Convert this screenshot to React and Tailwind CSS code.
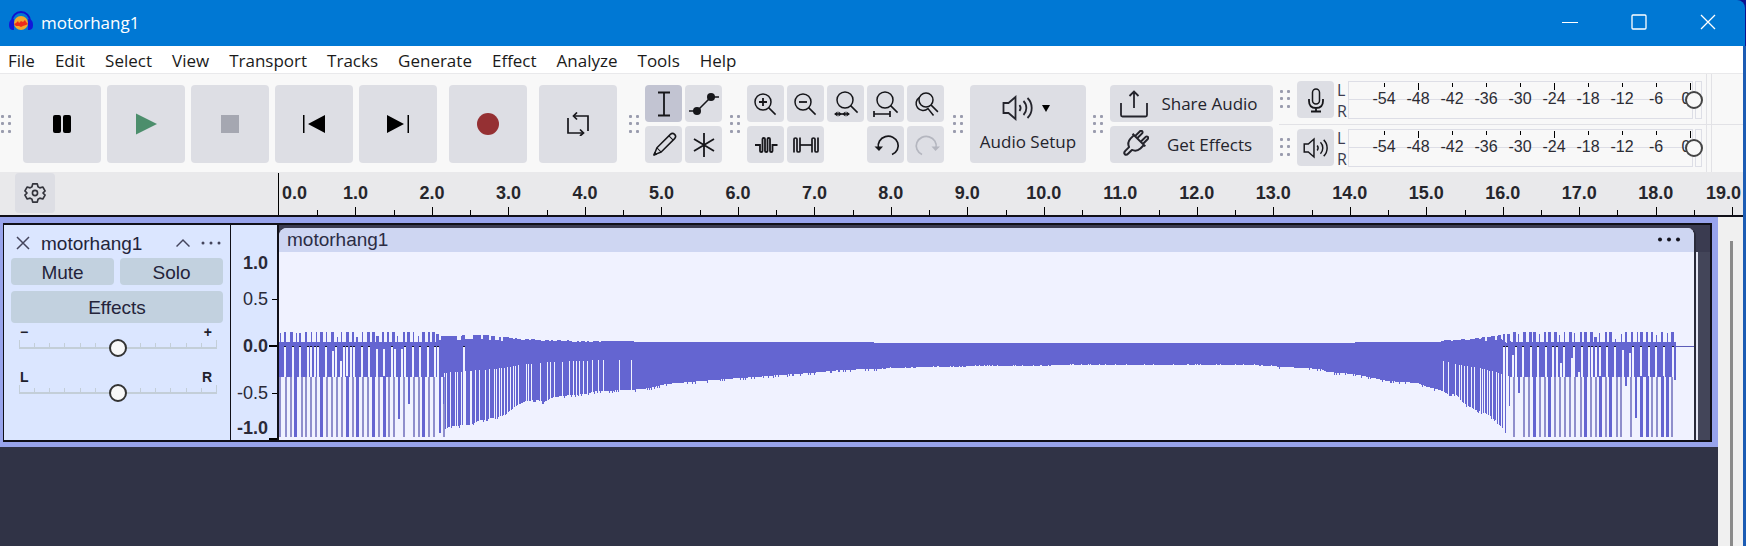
import clsx from 'clsx';

const MENUS = ['File', 'Edit', 'Select', 'View', 'Transport', 'Tracks', 'Generate', 'Effect', 'Analyze', 'Tools', 'Help'];

const DB_MARKS = ['-54', '-48', '-42', '-36', '-30', '-24', '-18', '-12', '-6', '0'];
const TALL_MARKS = ['-48', '-24', '0'];

// seconds visible on the timeline
const VISIBLE_SECONDS = 19.14;

/* ---------- waveform data ---------- */

const WAVE_W = 1415;
const WAVE_H = 189;
const ZERO = 94;
const WAVE_END = 1397;

// [x, y] envelopes, linear between points
const TOP_ENV = [
  [0, 89], [158, 89], [160, 83], [205, 82], [225, 84], [245, 86], [270, 87], [315, 88], [395, 89], [590, 89],
  [600, 90], [1070, 90], [1080, 89], [1160, 89], [1166, 87], [1185, 86], [1208, 84], [1222, 82], [1232, 89], [1397, 89],
];
const INNER_ENV = [
  [0, 125], [158, 125], [161, 121], [190, 119], [225, 116], [245, 112], [275, 110], [325, 108], [400, 108],
  [1150, 108], [1164, 109], [1182, 113], [1200, 116], [1216, 120], [1230, 124], [1232, 125], [1397, 125],
];
const OUTER_ENV = [
  [0, 125], [158, 125], [163, 125], [165, 178], [171, 174], [190, 173], [198, 169], [212, 166], [226, 163], [235, 155],
  [246, 149], [258, 148], [264, 150], [275, 145], [291, 143], [305, 142], [318, 139], [351, 138], [371, 136], [386, 132],
  [411, 130], [446, 127], [476, 125], [501, 123], [531, 121], [561, 118], [591, 117], [651, 115], [721, 114], [821, 113],
  [971, 113], [1006, 115], [1041, 117], [1048, 120], [1074, 122], [1094, 126], [1108, 129], [1138, 131], [1148, 135],
  [1161, 138], [1168, 142], [1176, 142], [1184, 151], [1192, 156], [1202, 160], [1208, 162], [1216, 168], [1222, 175],
  [1229, 182], [1231, 125], [1397, 125],
];

// columns that dip to full scale, the wide ones are drawn solid
const DEEP = [
  0, 6, 11, 22, 26, 31, 36, 47, 52, 57, 62, 73, 83, 88, 99, 109, 114, 124, 134, 139, 149, 154, 164,
  1234, 1244, 1249, 1260, 1265, 1275, 1280, 1285, 1290, 1295, 1301, 1311, 1316, 1326, 1337, 1341, 1351, 1372, 1377, 1392,
];
const DEEP_WIDE = [15, 41, 67, 77, 93, 104, 143, 1254, 1269, 1305, 1320, 1330, 1361, 1367, 1382, 1387];
const DIPS = [[119, 167], [129, 152], [160, 181], [1239, 141], [1346, 134], [1356, 166], [1395, 128]];

// light slots cut out of the body, [x, y] ones start lower than the zero line
const SLOTS = [
  5, 13, 20, 28, 31, 35, 38, 46, [53, 99], 56, [61, 109], 64, 67, 71, 74, 82, 89, [97, 97], [104, 97], 112, [115, 97],
  [122, 97], 125, 133, 140, 148, 155, 158, 184, 1224, 1227, [1233, 103], 1236, 1243, 1251, 1258, 1266, 1273, 1277,
  [1281, 111], 1284, [1292, 106], 1294, [1299, 120], 1302, 1309, 1312, 1316, 1320, 1327, 1335, [1343, 98], [1350, 101],
  1353, 1361, 1369, 1376, 1384, 1393,
].map((s) => (Array.isArray(s) ? s : [s, ZERO + 1]));

// slots that only start under the inner envelope
const LOW_SLOTS = [
  165, 167, 171, 176, 178, 182, 186, 191, 192, 196, 200, 206, 210, 215, 217, 220, 222, 225, 228, 231, 234, 236, 239,
  247, 249, 252, 261, 268, 271, 275, 283, 290, 294, 297, 300, 304, 308, 313, 319, 324, 340, 352, 1164, 1169, 1176, 1180,
  1182, 1185, 1188, 1192, 1195, 1201, 1203, 1205, 1208, 1210, 1213, 1217, 1219, 1222, 1225, 1229, 1231,
];

const SPIKES = [
  [1, 1, 80], [5, 2, 79], [11, 3, 79], [17, 1, 80], [20, 2, 80], [26, 2, 79], [32, 1, 79], [37, 1, 79], [41, 3, 79],
  [47, 1, 79], [52, 3, 79], [58, 1, 84], [62, 1, 79], [67, 3, 79], [73, 2, 79], [77, 2, 84], [83, 1, 79], [88, 3, 79],
  [93, 3, 79], [97, 3, 83], [103, 2, 79], [108, 2, 79], [113, 3, 79], [118, 1, 83], [124, 2, 79], [128, 3, 79],
  [134, 1, 79], [139, 1, 83], [143, 3, 79], [149, 2, 79], [153, 3, 79], [157, 3, 81],
  [1224, 2, 81], [1228, 3, 81], [1234, 3, 79], [1239, 1, 81], [1244, 3, 79], [1250, 3, 79], [1254, 3, 79], [1260, 1, 81],
  [1265, 2, 79], [1269, 3, 79], [1275, 3, 79], [1280, 1, 82], [1285, 1, 79], [1290, 3, 79], [1295, 1, 80], [1301, 2, 79],
  [1305, 3, 79], [1311, 3, 79], [1315, 3, 84], [1320, 1, 80], [1326, 2, 79], [1330, 3, 79], [1336, 1, 86], [1342, 1, 81],
  [1346, 2, 79], [1352, 2, 79], [1358, 1, 79], [1361, 3, 79], [1367, 2, 79], [1372, 2, 79], [1377, 1, 82],
  [1382, 2, 79], [1388, 1, 80], [1392, 3, 79],
];

function envelopeAt(points, x) {
  for (let i = 1; i < points.length; i++) {
    const [x0, y0] = points[i - 1];
    const [x1, y1] = points[i];
    if (x <= x1) return y0 + ((y1 - y0) * (x - x0)) / (x1 - x0);
  }
  return points[points.length - 1][1];
}

function noise(x) {
  const n = Math.sin(x * 12.9898) * 43758.5453;
  return n - Math.floor(n);
}

function bar(x, y0, y1, w = 1) {
  return `M${x} ${y0}h${w}V${y1}h-${w}z`;
}

function buildBody() {
  let d = '';
  for (let x = 0; x < WAVE_END; x++) {
    let top = envelopeAt(TOP_ENV, x);
    let bottom = envelopeAt(OUTER_ENV, x);
    const edge = x > 158 && x < 1232;
    if (edge && (x < 330 || x > 1165) && noise(x >> 1) > 0.6) top += x < 230 || x > 1205 ? 4 : 1;
    if (edge && noise(x) > 0.85) bottom += x > 600 && x < 1000 ? -1 : 2;

    const slot = SLOTS.find((s) => s[0] === x || s[0] + 1 === x);
    if (slot) bottom = slot[1];
    else if (LOW_SLOTS.includes(x)) bottom = envelopeAt(INNER_ENV, x);
    d += bar(x, Math.round(top), Math.round(bottom));
  }
  DEEP_WIDE.forEach((x) => {
    d += bar(x, 124, 185, 3);
  });
  DIPS.forEach(([x, y]) => {
    d += bar(x, 120, y, 2);
  });
  SPIKES.forEach(([x, w, y]) => {
    d += bar(x, y, ZERO, w);
  });
  return d;
}

const BODY_PATH = buildBody();
const DEEP_PATH = DEEP.map((x) => bar(x, 125, 185, 2)).join('');

/* ---------- small pieces ---------- */

function Grip({ className }) {
  return (
    <svg width="12" height="20" viewBox="0 0 12 20" fill="#9a9cae" className={clsx('shrink-0', className)}>
      {[1, 8].map((x) => [1, 8, 16].map((y) => <rect key={`${x}-${y}`} x={x} y={y} width="3" height="3" rx="1" />))}
    </svg>
  );
}

function ToolButton({ label, active, className, children }) {
  return (
    <button
      type="button"
      aria-label={label}
      className={clsx(
        'flex shrink-0 items-center justify-center rounded-sm text-[#16161a]',
        active ? 'bg-[#c2c4d2]' : 'bg-[#dddee4]',
        className
      )}
    >
      {children}
    </button>
  );
}

function Icon({ size = 30, children, ...rest }) {
  return (
    <svg width={size} height={size} viewBox={`0 0 ${size} ${size}`} fill="none" stroke="currentColor" strokeWidth="1.5" {...rest}>
      {children}
    </svg>
  );
}

function Lens({ x = 14, y = 12, r = 8 }) {
  const k = r * 0.7;
  return (
    <>
      <circle cx={x} cy={y} r={r} />
      <path d={`M${x + k} ${y + k}L${x + k + 7} ${y + k + 7}`} />
    </>
  );
}

function SpeakerIcon({ size = 30 }) {
  return (
    <svg width={size} height={size} viewBox="0 0 32 32" fill="none" stroke="currentColor" strokeWidth="1.8">
      <path d="M1.5 11v10h5l7 6V5l-7 6z" />
      <path d="M17.5 13a5 5 0 0 1 0 6M21.5 9a10 10 0 0 1 0 14M25.5 6a14 14 0 0 1 0 20" />
    </svg>
  );
}

function LogoIcon() {
  return (
    <svg width="26" height="24" viewBox="0 0 26 24">
      <path d="M4 14V11a9 9 0 0 1 18 0v3" fill="none" stroke="#0d12cf" strokeWidth="2" />
      <circle cx="13" cy="13" r="7" fill="#f3a72e" />
      <path d="M6 14l2-1 2-2 1 2 2-2 2 1 2-2 1 2 2 2-2 1-3 1-2 1-2-1-3 0z" fill="#ee2c1c" />
      <path d="M6 9C2 9 1 12 1 15s1 5 5 5z" fill="#1218d8" />
      <path d="M20 9c4 0 5 3 5 6s-1 5-5 5z" fill="#1218d8" />
    </svg>
  );
}

/* ---------- window chrome ---------- */

function TitleBar() {
  return (
    <header className="mr-px flex h-[46px] items-center rounded-tr-lg bg-[#0078d4] pb-[2px] pl-2 text-white">
      <LogoIcon />
      <h1 className="ml-[7px] text-[17px] leading-none">motorhang1</h1>
      <div className="ml-auto flex items-center gap-[53px] pr-[29px]">
        <button type="button" aria-label="Minimize">
          <Icon size={16} strokeWidth="1"><path d="M0 8.500h16" /></Icon>
        </button>
        <button type="button" aria-label="Maximize">
          <Icon size={16} strokeWidth="1.300"><rect x="1" y="1" width="14" height="14" rx="1" /></Icon>
        </button>
        <button type="button" aria-label="Close">
          <Icon size={16} strokeWidth="1.300"><path d="M1 1l14 14M15 1L1 15" /></Icon>
        </button>
      </div>
    </header>
  );
}

function MenuBar() {
  return (
    <nav className="flex h-[27px] items-center gap-[20px] bg-white px-2 pt-[2px]">
      {MENUS.map((m) => (
        <button key={m} type="button" className="text-[17px] leading-none text-[#1a1a1a]">{m}</button>
      ))}
    </nav>
  );
}

/* ---------- toolbars ---------- */

function Transport() {
  const size = 'size-[78px]';
  return (
    <div className="flex items-center gap-[6px]">
      <ToolButton label="Pause" className={size}>
        <Icon size={18} stroke="none" fill="#000"><rect width="8" height="18" rx="2" /><rect x="10" width="8" height="18" rx="2" /></Icon>
      </ToolButton>
      <ToolButton label="Play" className={size}>
        <Icon size={22} stroke="none" fill="#4c8e6c"><path d="M1 0.500L22 11 1 21.500z" /></Icon>
      </ToolButton>
      <ToolButton label="Stop" className={size}>
        <Icon size={18} stroke="none" fill="#a5a7b1"><rect width="18" height="18" /></Icon>
      </ToolButton>
      <ToolButton label="Skip to Start" className={size}>
        <Icon size={22} stroke="none" fill="#000"><path d="M0 2h1.500v18H0zM22 2v18L5 11z" /></Icon>
      </ToolButton>
      <ToolButton label="Skip to End" className={size}>
        <Icon size={22} stroke="none" fill="#000"><path d="M20.500 2H22v18h-1.500zM0 2l17 9L0 20z" /></Icon>
      </ToolButton>
      <ToolButton label="Record" className={clsx(size, 'ml-[6px]')}>
        <Icon size={22} stroke="none" fill="#953033"><circle cx="11" cy="11" r="11" /></Icon>
      </ToolButton>
      <ToolButton label="Loop" className={clsx(size, 'ml-[6px]')}>
        <Icon size={24} strokeWidth="1.700">
          <path d="M2 6v15h15M22 19V4H8" />
          <path d="M11 0.500L7.500 4 11 7.500M14 17.500l3.500 3.500L14 24" />
        </Icon>
      </ToolButton>
    </div>
  );
}

function Tools() {
  const size = 'size-[37px]';
  return (
    <div className="grid grid-cols-2 gap-x-[3px] gap-y-1">
      <ToolButton label="Selection Tool" active className={size}>
        <Icon><path d="M9 3.500h12M9 26.500h12M15 3.500v23" strokeWidth="1.800" /></Icon>
      </ToolButton>
      <ToolButton label="Envelope Tool" className={size}>
        <Icon>
          <path d="M0 22h8L22 8h8" />
          <circle cx="8" cy="22" r="4" fill="currentColor" stroke="none" />
          <circle cx="22" cy="8" r="4" fill="currentColor" stroke="none" />
        </Icon>
      </ToolButton>
      <ToolButton label="Draw Tool" className={size}>
        <Icon>
          <g transform="rotate(45 15 15)" strokeLinejoin="round">
            <path d="M12 22V3a3 3 0 0 1 6 0v19l-3 7z" />
            <path d="M12 5h6M12 22h6" strokeWidth="1" />
            <path d="M14 27h2l-1 2z" fill="currentColor" />
          </g>
        </Icon>
      </ToolButton>
      <ToolButton label="Multi-Tool" className={size}>
        <Icon strokeWidth="1.800"><path d="M15 3v24M5 9l20 12M5 21L25 9" /></Icon>
      </ToolButton>
    </div>
  );
}

function EditTools() {
  const size = 'size-[37px]';
  return (
    <div className="grid grid-cols-5 gap-x-[3px] gap-y-1">
      <ToolButton label="Zoom In" className={size}>
        <Icon><Lens x={12} y={13} /><path d="M8 13h8M12 9v8" strokeWidth="1.800" /></Icon>
      </ToolButton>
      <ToolButton label="Zoom Out" className={size}>
        <Icon><Lens x={12} y={13} /><path d="M8 13h8" strokeWidth="1.800" /></Icon>
      </ToolButton>
      <ToolButton label="Fit Selection to Width" className={size}>
        <Icon>
          <Lens x={14} y={11} />
          <path d="M4 25h14" />
          <path d="M6.500 22.500L3 25l3.500 2.500zM15.500 22.500L19 25l-3.500 2.500zM7.500 22.500L11 25l-3.500 2.500zM14.500 22.500L11 25l3.500 2.500z" fill="currentColor" stroke="none" />
        </Icon>
      </ToolButton>
      <ToolButton label="Fit Project to Width" className={size}>
        <Icon><Lens x={14} y={11} /><path d="M3 25h16M3 22v6M19 22v6" strokeWidth="1.700" /></Icon>
      </ToolButton>
      <ToolButton label="Zoom Toggle" className={size}>
        <Icon>
          <Lens x={15} y={11} r={7} />
          <path d="M8.500 8.500a7 7 0 1 0 8.500 11l5.500 7" />
        </Icon>
      </ToolButton>
      <ToolButton label="Trim Audio" className={size}>
        <Icon strokeWidth="1.800">
          <path d="M4 15h5v6q0 1 1.250 1t1.250-1V9q0-1 1.250-1t1.250 1v12q0 1 1.250 1t1.250-1V9q0-1 1.250-1t1.250 1v12q0 1 1.250 1t1.250-1V15h5" />
        </Icon>
      </ToolButton>
      <ToolButton label="Silence Audio" className={size}>
        <Icon strokeWidth="1.700">
          <path d="M3 22.500V9q0-1 1.500-1T6 9v12q0 1 1.500 1T9 21V7.500" />
          <path d="M9 15h12" />
          <path d="M21 22.500V9q0-1 1.500-1T24 9v12q0 1 1.500 1t1.500-1V7.500" />
        </Icon>
      </ToolButton>
      <span />
      <ToolButton label="Undo" className={size}>
        <Icon strokeWidth="1.700">
          <path d="M7.500 18a10 9.500 0 1 1 13.500 6.500" />
          <path d="M3.500 16.500h8.500L8 21z" fill="currentColor" stroke="none" />
        </Icon>
      </ToolButton>
      <ToolButton label="Redo" className={size}>
        <Icon strokeWidth="1.700" className="text-[#b4b6bf]">
          <path d="M25 18a10 9.500 0 1 0-14 6.500" />
          <path d="M29 16.500h-8.500l4 4.500z" fill="currentColor" stroke="none" />
        </Icon>
      </ToolButton>
    </div>
  );
}

function AudioSetup() {
  return (
    <button type="button" className="flex h-[78px] w-[116px] shrink-0 flex-col items-center rounded-sm bg-[#dddee4] pt-[7px] text-[#24242c]">
      <span className="flex items-center gap-2 pr-1">
        <SpeakerIcon size={32} />
        <svg width="8" height="8" viewBox="0 0 8 8"><path d="M0 1h8L4 8z" fill="#000" /></svg>
      </span>
      <span className="mt-2 text-[17px] leading-5 whitespace-nowrap">Audio Setup</span>
    </button>
  );
}

function ShareTools() {
  const cls = 'flex h-[37px] w-[163px] items-center rounded-sm bg-[#dddee4] pr-[3px] pl-[9px] text-[17px] whitespace-nowrap text-[#24242c]';
  return (
    <div className="flex flex-col gap-1">
      <button type="button" className={cls}>
        <Icon strokeWidth="1.800">
          <path d="M2 14v12q0 1.500 1.500 1.500h23q1.500 0 1.500-1.500V14M15 19V3M10.500 7L15 2.500 19.500 7" />
        </Icon>
        <span className="flex-1 text-center">Share Audio</span>
      </button>
      <button type="button" className={cls}>
        <Icon strokeWidth="2">
          <g transform="rotate(45 15 15)" strokeLinejoin="round">
            <path d="M6 8h18M8 8v5a8 8 0 0 0 5 7v5a2 3 0 1 0 4 0v-5a8 8 0 0 0 5-7V8" />
            <path d="M9.500 8V1a1.500 1.500 0 0 1 3 0v7M17.500 8V1a1.500 1.500 0 0 1 3 0v7" />
          </g>
        </Icon>
        <span className="flex-1 text-center">Get Effects</span>
      </button>
    </div>
  );
}

function Meter({ label, icon }) {
  return (
    <div className="flex h-[38px] items-start">
      <Grip className="mt-2 mr-[6px]" />
      <ToolButton label={label} className="size-[37px]">{icon}</ToolButton>
      <div className="-mt-px flex w-[14px] flex-col pl-[3px] text-[16px] leading-[21px] text-[#3c3c50]">
        <span>L</span>
        <span>R</span>
      </div>
      <div className="relative flex h-[38px] w-[355px] gap-[2px]">
        <div className="flex w-[345px] shrink-0 flex-col border border-[#dddee6]">
          <span className="h-[18px] border-b border-[#dddee6]" />
        </div>
        <div className="w-[7px] border border-[#dddee6]" />
        <div className="absolute inset-y-0 left-0 flex pt-[2px] pl-[19px] font-['Liberation_Sans',Arial,sans-serif]">
          {DB_MARKS.map((m) => (
            <div key={m} className="flex w-[34px] flex-col items-center text-[16px] leading-[18px] text-[#2c2c34]">
              <span className={clsx('w-px bg-black', TALL_MARKS.includes(m) ? 'h-[7px]' : 'mb-[3px] h-1')} />
              <span className={clsx(m === '0' && 'pr-2')}>{m}</span>
            </div>
          ))}
        </div>
        <input
          type="range"
          aria-label={`${label} level`}
          defaultValue="100"
          className="absolute inset-0 h-[38px] w-full appearance-none bg-transparent [&::-webkit-slider-thumb]:size-[18px] [&::-webkit-slider-thumb]:appearance-none [&::-webkit-slider-thumb]:rounded-full [&::-webkit-slider-thumb]:border-2 [&::-webkit-slider-thumb]:border-[#444] [&::-webkit-slider-thumb]:bg-[#f8f8f8]"
        />
      </div>
    </div>
  );
}

function Toolbars() {
  return (
    <div className="flex h-[100px] items-center overflow-hidden border-y border-[#e9e9eb] bg-[#f8f8f8] pt-[2px]">
      <Grip className="mr-[11px]" />
      <Transport />
      <Grip className="mr-[5px] ml-[11px]" />
      <Tools />
      <Grip className="mr-[6px] ml-[7px]" />
      <EditTools />
      <Grip className="mr-[6px] ml-[8px]" />
      <AudioSetup />
      <Grip className="mr-[6px] ml-[6px]" />
      <ShareTools />
      <div className="ml-[6px] flex h-full flex-1 flex-col">
        <div className="flex h-[49px] border-b border-[#e2e2e6] pt-[5px]">
          <Meter
            label="Record Meter"
            icon={
              <Icon size={26}>
                <rect x="9.500" y="2" width="7" height="15" rx="3.500" />
                <path d="M6 12v2q0 7 7 7t7-7v-2M13 21v3M8 24.500h10" strokeWidth="1.800" />
              </Icon>
            }
          />
          <span className="-mt-[7px] ml-[3px] w-[6px] border-x border-[#e2e2e6]" />
        </div>
        <div className="flex flex-1 pt-1">
          <Meter label="Playback Meter" icon={<SpeakerIcon size={26} />} />
          <span className="-mt-1 ml-[3px] w-[6px] border-x border-[#e2e2e6]" />
        </div>
      </div>
    </div>
  );
}

/* ---------- timeline ---------- */

function Timeline() {
  const seconds = Array.from({ length: 20 }, (_, i) => i);
  const width = `${100 / VISIBLE_SECONDS}%`;
  return (
    <div className="flex h-11 border-b-2 border-[#101018] bg-[#e9e9eb] font-['Liberation_Sans',Arial,sans-serif]">
      <div className="w-[278px] shrink-0 pl-[15px]">
        <ToolButton label="Timeline Options" className="size-10">
          <svg width="22" height="22" viewBox="0 0 24 24" fill="none" stroke="#33343c" strokeWidth="1.800" strokeLinejoin="round">
            <path d="M9.500 2h5l.8 3.200 2 1.200L20.500 5.500 23 9.700 20.700 12 23 14.300 20.500 18.500l-3.200-.9-2 1.200L14.500 22h-5l-.8-3.200-2-1.200-3.200.9L1 14.300 3.300 12 1 9.700 3.500 5.500l3.200.9 2-1.200z" />
            <circle cx="12" cy="12" r="2.800" />
          </svg>
        </ToolButton>
      </div>
      <div className="flex min-w-0 flex-1 overflow-hidden border-l border-black">
        {seconds.map((s) => (
          <div key={s} className="flex shrink-0 flex-col justify-between pt-[10px]" style={{ width }}>
            <span
              className={clsx(
                'self-start text-[18px] leading-5 font-bold whitespace-nowrap text-[#26262c]',
                s === 0 && 'ml-[3px]',
                s > 0 && s < 19 && '-translate-x-1/2',
                s === 19 && '-translate-x-3/4'
              )}
            >
              {s.toFixed(1)}
            </span>
            <span className="flex items-end">
              <span className={clsx('h-2 w-1/2', s > 0 && 'border-l border-black')} />
              <span className="h-[5px] w-1/2 border-l border-black" />
            </span>
          </div>
        ))}
      </div>
    </div>
  );
}

/* ---------- track ---------- */

function TrackSlider({ label, left, right }) {
  return (
    <div className="flex flex-col pr-[6px] pl-2 text-[14px] leading-[14px] font-bold text-[#20202c]">
      <div className="flex justify-between pr-[5px] pl-px">
        <span>{left}</span>
        <span>{right}</span>
      </div>
      <div className="relative h-[18px]">
        <div className="flex h-[10px] justify-between border-b-2 border-[#c3ced8]">
          {Array.from({ length: 14 }, (_, i) => (
            <span key={i} className={clsx('w-px self-end bg-[#c3ced8]', i === 0 || i === 13 ? 'h-[7px]' : 'h-1')} />
          ))}
        </div>
        <input
          type="range"
          aria-label={label}
          defaultValue="50"
          className="absolute inset-0 h-[18px] w-full appearance-none bg-transparent [&::-webkit-slider-thumb]:size-[18px] [&::-webkit-slider-thumb]:appearance-none [&::-webkit-slider-thumb]:rounded-full [&::-webkit-slider-thumb]:border-2 [&::-webkit-slider-thumb]:border-[#333] [&::-webkit-slider-thumb]:bg-[#f8f8f8]"
        />
      </div>
    </div>
  );
}

function TrackPanel() {
  const btn = 'rounded-sm bg-[#c2d1df] text-center text-[19px] leading-[27px]';
  return (
    <aside className="flex w-[227px] shrink-0 flex-col border-r border-[#101018] bg-[#dbe6ff] px-[7px] text-[#24243a]">
      <div className="flex h-[32px] items-center pt-1 pl-[5px]">
        <button type="button" aria-label="Close track" className="text-[#44455c]">
          <Icon size={14}><path d="M1 1l12 12M13 1L1 13" /></Icon>
        </button>
        <span className="ml-[11px] text-[19px] leading-none">motorhang1</span>
        <button type="button" aria-label="Collapse" className="ml-auto text-[#44455c]">
          <Icon size={14}><path d="M0.500 10.500L7 4l6.500 6.500" /></Icon>
        </button>
        <button type="button" aria-label="Track menu" className="mr-[2px] ml-[11px]">
          <svg width="20" height="4" viewBox="0 0 20 4" fill="#44455c"><circle cx="2" cy="2" r="1.500" /><circle cx="10" cy="2" r="1.500" /><circle cx="18" cy="2" r="1.500" /></svg>
        </button>
      </div>
      <div className="mt-px flex gap-[6px]">
        <button type="button" className={clsx(btn, 'h-[27px] flex-1 pt-px')}>Mute</button>
        <button type="button" className={clsx(btn, 'h-[27px] flex-1 pt-px')}>Solo</button>
      </div>
      <button type="button" className={clsx(btn, 'mt-[6px] mb-[2px] h-8')}>Effects</button>
      <TrackSlider label="Gain" left="−" right="+" />
      <div className="h-[13px]" />
      <TrackSlider label="Pan" left="L" right="R" />
    </aside>
  );
}

function AmplitudeRuler() {
  const row = 'flex items-center justify-end gap-1';
  return (
    <div className="flex w-[46px] shrink-0 flex-col bg-[#dbe6ff] pt-[28px] text-[18px] leading-5 text-[#2a2a38]">
      <div className={clsx(row, 'pr-[9px] font-bold')}>1.0</div>
      <div className={clsx(row, 'mt-[16px]')}>0.5<span className="h-px w-[5px] bg-black" /></div>
      <div className={clsx(row, 'mt-[27px] font-bold')}>0.0<span className="-ml-[3px] h-[2px] w-2 bg-black" /></div>
      <div className={clsx(row, 'mt-[27px]')}>-0.5<span className="h-px w-[5px] bg-black" /></div>
      <div className={clsx(row, 'mt-[15px] pr-[9px] font-bold')}>-1.0</div>
      <span className="mt-auto ml-auto h-[2px] w-2 bg-black" />
    </div>
  );
}

function Clip() {
  return (
    <div className="flex min-w-0 flex-1 border-l-2 border-[#101018] bg-[#3a3b50] pt-[3px]">
      <div className="flex min-w-0 flex-1 flex-col overflow-hidden rounded-t-lg border-r-2 border-[#2a2b3a] bg-[#f0f2ff]">
        <div className="flex h-[24px] shrink-0 items-center bg-[#ced6f2] pr-[13px] pb-[2px] pl-2">
          <span className="text-[19px] leading-none text-[#2c2c44]">motorhang1</span>
          <button type="button" aria-label="Clip menu" className="ml-auto">
            <svg width="24" height="5" viewBox="0 0 24 5" fill="#14141e"><circle cx="3" cy="2.500" r="2" /><circle cx="12" cy="2.500" r="2" /><circle cx="21" cy="2.500" r="2" /></svg>
          </button>
        </div>
        <svg className="h-[189px] w-full" viewBox={`0 -1 ${WAVE_W} ${WAVE_H}`} preserveAspectRatio="none" shapeRendering="crispEdges">
          <path d={`M${WAVE_END} ${ZERO}H${WAVE_W}`} stroke="#5a5ab8" />
          <path d={DEEP_PATH} fill="#8f8fcc" />
          <path d={BODY_PATH} fill="#6465d1" />
          {SLOTS.filter((s) => s[1] === ZERO + 1).map(([x]) => (
            <rect key={x} x={x} y={ZERO} width="2" height="1" fill="#14142c" />
          ))}
        </svg>
      </div>
      <div className="mt-[24px] w-[14px] border-l-2 border-[#e4e6f4] bg-[#434559]" />
    </div>
  );
}

function Track() {
  return (
    <section className="border-t-6 border-r-6 border-b-5 border-l-3 border-[#98a4ec] font-['Liberation_Sans',Arial,sans-serif]">
      <div className="flex h-[219px] border-y-2 border-r-2 border-l border-[#101018]">
        <TrackPanel />
        <AmplitudeRuler />
        <Clip />
      </div>
    </section>
  );
}

export default function App() {
  return (
    <div className="flex h-screen flex-col overflow-hidden bg-[#0c1290] font-['Open_Sans','Noto_Sans',sans-serif]">
      <TitleBar />
      <div className="flex min-h-0 flex-1 flex-col border-r-3 border-[#1c5cb4]">
        <MenuBar />
        <Toolbars />
        <Timeline />
        <main className="flex min-h-0 flex-1 bg-[#f0f0f0]">
          <div className="min-w-0 flex-1 bg-[#303346]">
            <Track />
          </div>
          <div className="flex w-[25px] justify-center pt-6 pl-[2px]">
            <div className="w-[3px] bg-[#8a8a8a]" />
          </div>
        </main>
      </div>
    </div>
  );
}
